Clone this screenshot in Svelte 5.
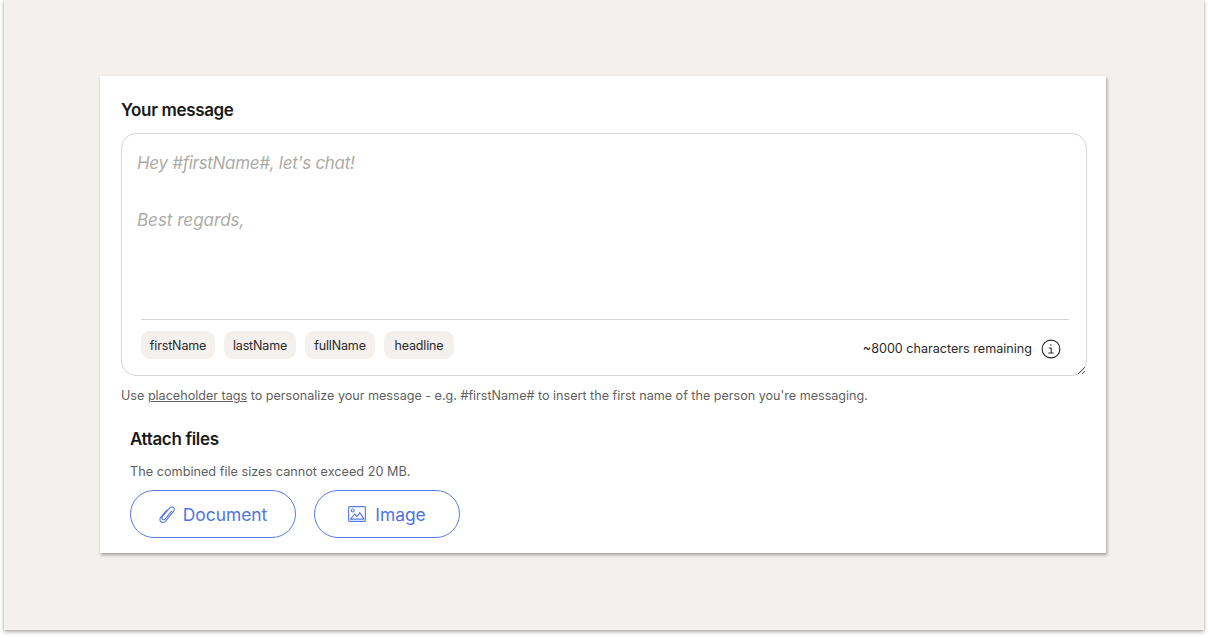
<script>
  const tags = ['firstName', 'lastName', 'fullName', 'headline'];
</script>

<div class="page">
  <main class="card">
    <h2 class="title">Your message</h2>
    <section class="box">
      <div class="placeholder">
        <p class="first">Hey #firstName#, let's chat!</p>
        <p>Best regards,</p>
      </div>
      <div class="foot">
        <div class="tags">
          {#each tags as tag}
            <span class="tag">{tag}</span>
          {/each}
        </div>
        <div class="count">
          <span>~8000 characters remaining</span>
          <svg width="20" height="20" viewBox="0 0 20 20" fill="none" stroke="#2a2a2a" stroke-width="1.1">
            <circle cx="10" cy="10" r="8.9" />
            <path d="M8.2 9h2v5M7.8 14h4.4" stroke-linecap="round" />
            <circle cx="9.9" cy="6" r=".7" fill="#2a2a2a" stroke="none" />
          </svg>
        </div>
      </div>
      <svg class="grip" width="9" height="9" viewBox="0 0 9 9" stroke="#555" stroke-width="1">
        <path d="M1 8 8 1M5 8l3-3" />
      </svg>
    </section>
    <p class="hint">Use <a href="#tags">placeholder tags</a> to personalize your message - e.g. #firstName# to insert the first name of the person you're messaging.</p>

    <section class="attach">
      <h3>Attach files</h3>
      <p>The combined file sizes cannot exceed 20 MB.</p>
      <div class="buttons">
        <button class="doc" type="button">
          <svg width="17" height="19" viewBox="0 0 18 20" fill="none" stroke="#5a7de6" stroke-width="1.2" stroke-linecap="round" stroke-linejoin="round">
            <path d="M13.500 6.500 6.600 14.600c-.9 1-2.300 1-3 .3-.8-.7-.7-2 .1-3l7.400-8.600c1.200-1.400 3-1.700 4.200-.7 1.200 1 1.100 2.800-.1 4.200L7.500 16.500c-1.700 2-4 2.300-5.400 1.200C.7 16.500.8 14.200 2.400 12.300L8.500 5.200" />
          </svg>
          Document
        </button>
        <button class="img" type="button">
          <svg width="18" height="16" viewBox="0 0 19 17" fill="none" stroke="#5a7de6" stroke-width="1.2" stroke-linejoin="round">
            <rect x=".6" y=".6" width="17.800" height="15.800" rx="1" />
            <circle cx="5" cy="4.700" r="1.500" />
            <path d="M2.500 14 7 8.500l2.500 2.700L12.500 7l4.500 7z" />
          </svg>
          Image
        </button>
      </div>
    </section>
  </main>
</div>

<style>
  :global(body) {
    margin: 0;
    min-height: 638px;
    background: #fff;
    font-family: Inter, "Liberation Sans", sans-serif;
  }
  .page {
    box-sizing: border-box;
    width: 1200px;
    height: 630px;
    margin-left: 4px;
    padding: 76px 0 0 96px;
    background: #f4f0ed;
    box-shadow: 0 2px 4px rgba(60, 55, 50, 0.4), 0 0 2px rgba(60, 55, 50, 0.16);
  }
  .card {
    box-sizing: border-box;
    width: 1006px;
    height: 477px;
    padding: 23px 20px 0 21px;
    background: #fff;
    box-shadow: 1px 2px 3px rgba(60, 55, 50, 0.45);
  }
  .title {
    margin: 0 0 12px;
    height: 22px;
    font-size: 17px;
    line-height: 22px;
    font-weight: 600;
    letter-spacing: -0.35px;
    color: #1a1a1a;
  }
  .box {
    position: relative;
    box-sizing: border-box;
    width: 966px;
    height: 243px;
    padding: 16px 17px 0 19px;
    border: 1px solid #d9d5d0;
    border-radius: 15px;
  }
  .placeholder {
    height: 169px;
    margin-left: -4px;
    font-size: 17px;
    font-style: italic;
    line-height: 26px;
    color: #adaba6;
  }
  .placeholder p {
    margin: 0 0 31px;
  }
  .placeholder .first {
    letter-spacing: -0.3px;
  }
  .foot {
    display: flex;
    justify-content: space-between;
    height: 50px;
    border-top: 1px solid #d9d5d0;
  }
  .tags {
    display: grid;
    grid-template-columns: 74px 72px 70px 70px;
    gap: 9px;
    padding-top: 11px;
  }
  .tag {
    height: 28px;
    border-radius: 9px;
    background: #f4f0ed;
    font-size: 12.500px;
    letter-spacing: -0.15px;
    line-height: 29px;
    text-align: center;
    color: #2a2a2a;
  }
  .count {
    display: flex;
    align-items: center;
    gap: 9px;
    height: 20px;
    margin-top: 19px;
    margin-right: -1px;
    padding-right: 9px;
    font-size: 12.600px;
    color: #2a2a2a;
  }
  .count span {
    margin-top: -2px;
  }
  .grip {
    position: absolute;
    right: 0;
    bottom: 0;
  }
  .hint {
    margin: 12px 0 0;
    height: 16px;
    font-size: 12.580px;
    line-height: 16px;
    color: #5f5f5f;
  }
  .hint a {
    color: #5f5f5f;
    text-decoration: underline;
  }
  .attach {
    padding: 24px 0 0 9px;
  }
  .attach h3 {
    margin: 0;
    height: 22px;
    font-size: 17px;
    line-height: 22px;
    font-weight: 600;
    letter-spacing: -0.35px;
    color: #1a1a1a;
  }
  .attach p {
    margin: 14px 0 0;
    height: 16px;
    font-size: 12.700px;
    line-height: 16px;
    color: #5f5f5f;
  }
  .buttons {
    display: flex;
    gap: 18px;
    margin-top: 10px;
  }
  button {
    display: flex;
    align-items: center;
    justify-content: center;
    gap: 7px;
    box-sizing: border-box;
    height: 48px;
    padding: 0;
    border: 1.200px solid #5a7de6;
    border-radius: 24px;
    background: #fff;
    font-family: inherit;
    font-size: 17.400px;
    font-weight: 400;
    color: #4f74e3;
  }
  .doc {
    width: 166px;
  }
  .img {
    width: 146px;
    gap: 9px;
  }
</style>
